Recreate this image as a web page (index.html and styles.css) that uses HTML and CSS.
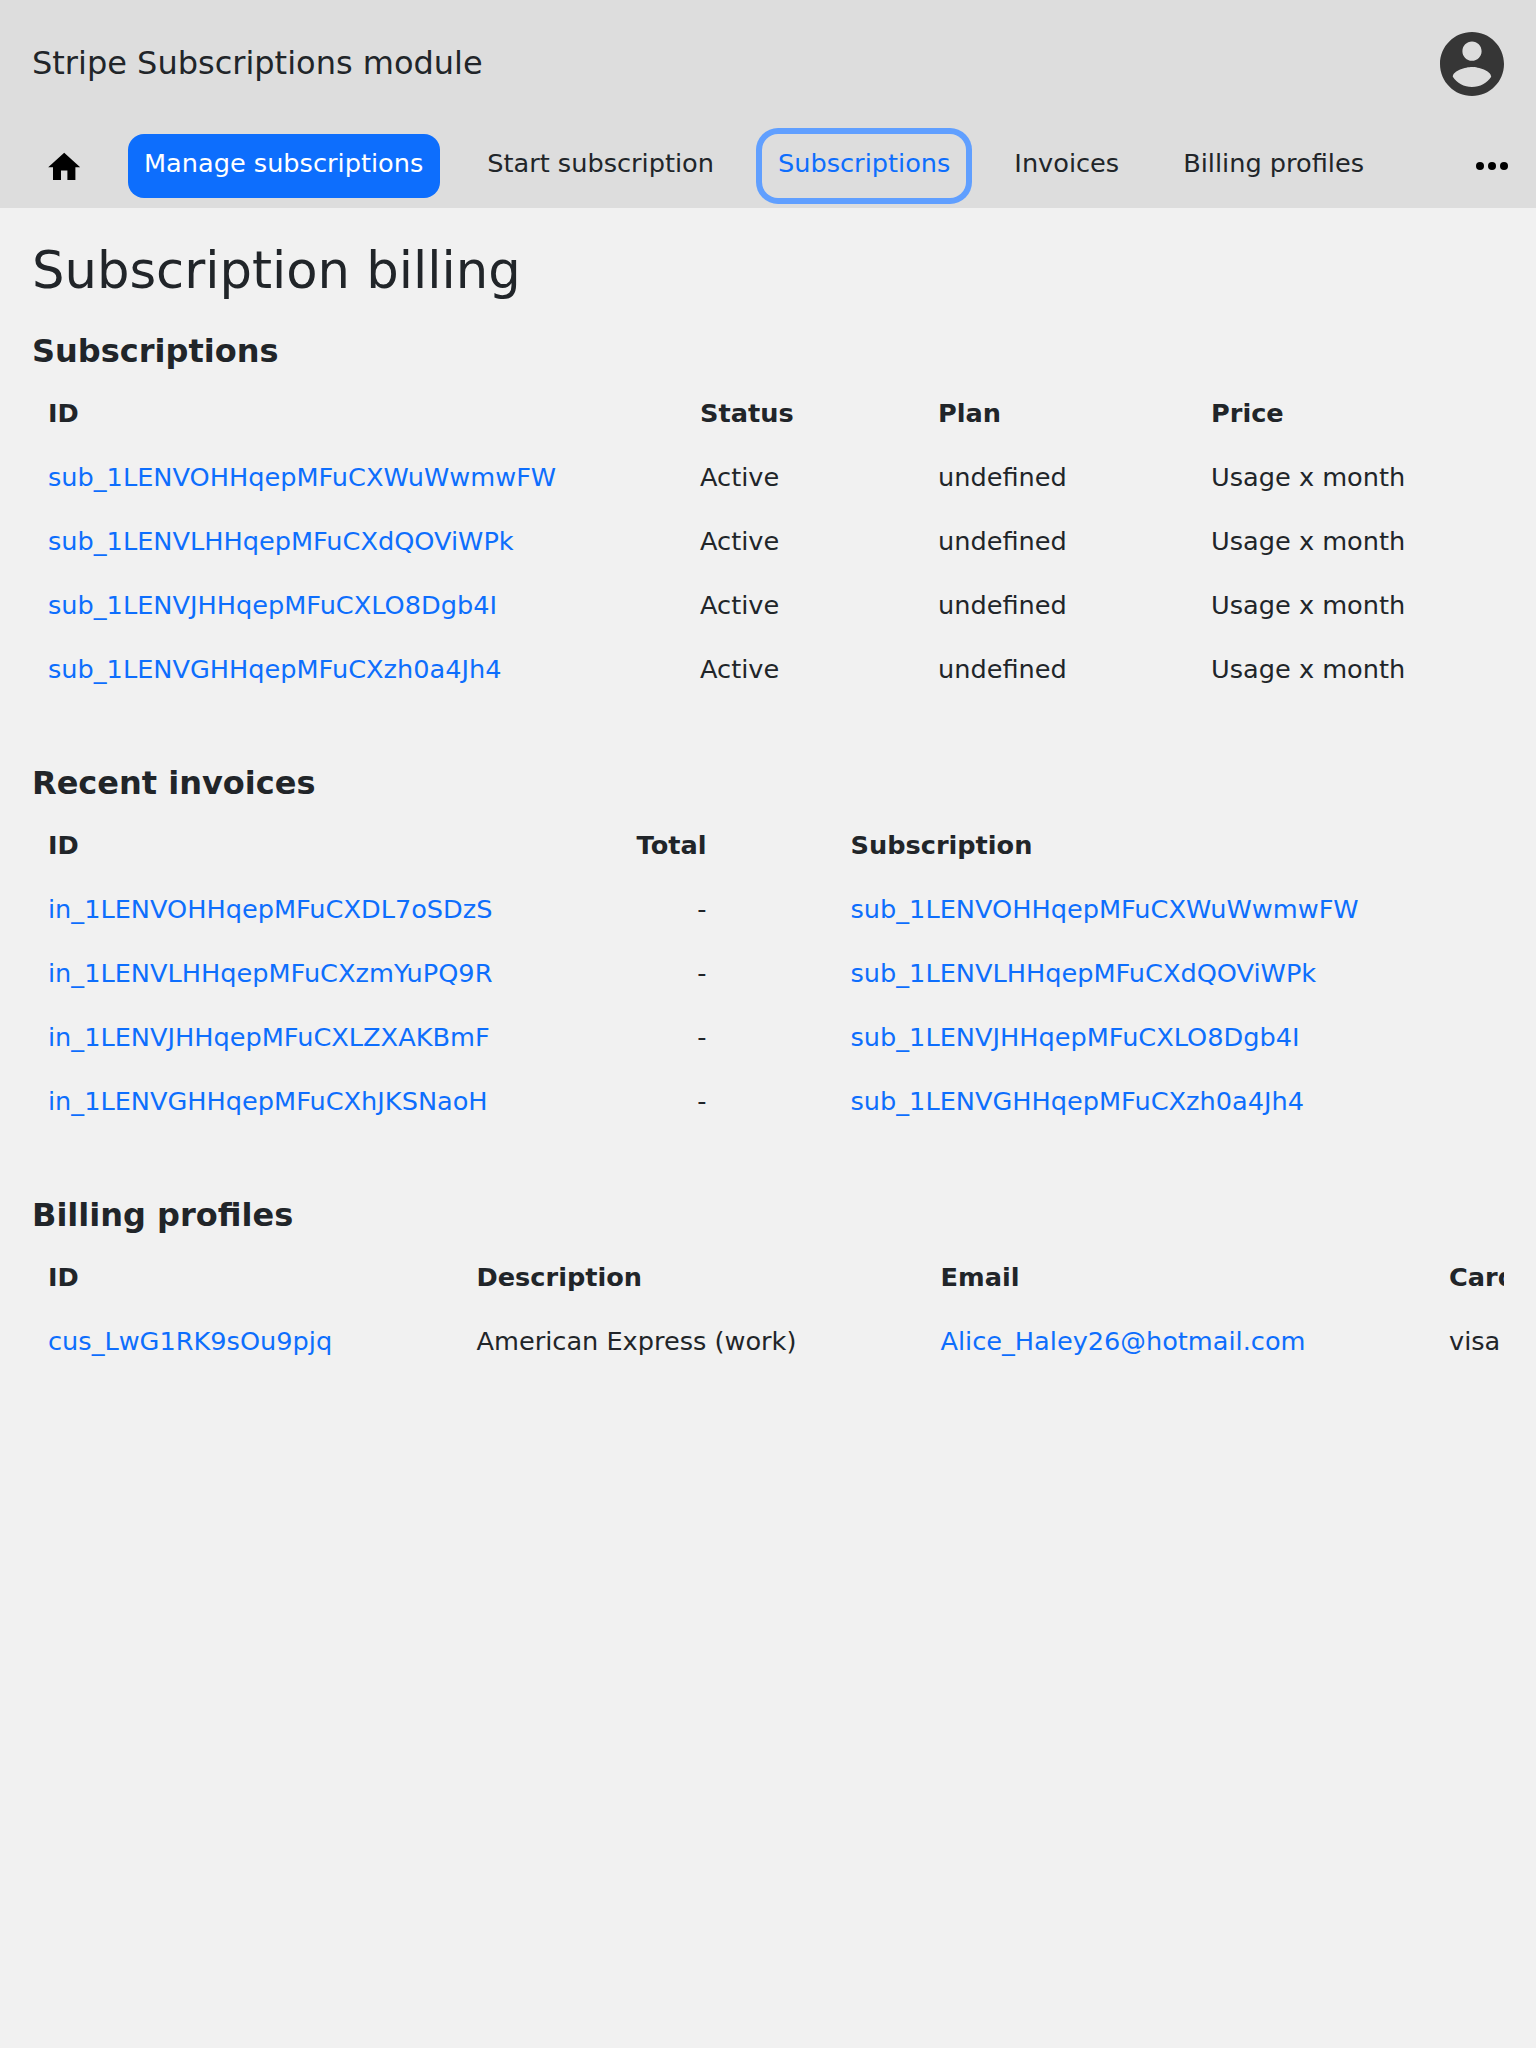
FILE: index.html
```html
<!DOCTYPE html>
<html lang="en">
<head>
<meta charset="utf-8">
<title>Subscription billing</title>
<link rel="stylesheet" href="styles.css">
</head>
<body>
<header class="header">
  <div class="title-bar">
    <span class="app-title">Stripe Subscriptions module</span>
    <svg class="avatar" viewBox="2 2 20 20"><path d="M12 2C6.48 2 2 6.48 2 12s4.480 10 10 10 10-4.480 10-10S17.520 2 12 2zm0 3c1.660 0 3 1.340 3 3s-1.340 3-3 3-3-1.340-3-3 1.340-3 3-3zm0 14.200c-2.500 0-4.710-1.280-6-3.220.03-1.990 4-3.080 6-3.080 1.990 0 5.970 1.090 6 3.080-1.290 1.940-3.500 3.220-6 3.220z"/></svg>
  </div>
  <nav class="nav">
    <a class="home"><svg class="home-icon" viewBox="0 0 24 24"><path d="M10 20v-6h4v6h5v-8h3L12 3 2 12h3v8z"/></svg></a>
    <a class="item active">Manage subscriptions</a>
    <a class="item">Start subscription</a>
    <a class="item focused">Subscriptions</a>
    <a class="item">Invoices</a>
    <a class="item">Billing profiles</a>
    <svg class="more" viewBox="0 0 32 8"><circle cx="4" cy="4" r="4"/><circle cx="16" cy="4" r="4"/><circle cx="28" cy="4" r="4"/></svg>
  </nav>
</header>
<main class="content">
  <h1>Subscription billing</h1>
  <section>
    <h2>Subscriptions</h2>
    <div class="scroller">
    <table class="subscriptions">
      <colgroup><col class="id"><col class="status"><col class="plan"><col class="price"></colgroup>
      <tr><th>ID</th><th>Status</th><th>Plan</th><th>Price</th></tr>
      <tr><td><a>sub_1LENVOHHqepMFuCXWuWwmwFW</a></td><td>Active</td><td>undefined</td><td>Usage x month</td></tr>
      <tr><td><a>sub_1LENVLHHqepMFuCXdQOViWPk</a></td><td>Active</td><td>undefined</td><td>Usage x month</td></tr>
      <tr><td><a>sub_1LENVJHHqepMFuCXLO8Dgb4I</a></td><td>Active</td><td>undefined</td><td>Usage x month</td></tr>
      <tr><td><a>sub_1LENVGHHqepMFuCXzh0a4Jh4</a></td><td>Active</td><td>undefined</td><td>Usage x month</td></tr>
    </table>
    </div>
  </section>
  <section>
    <h2>Recent invoices</h2>
    <div class="scroller">
    <table class="invoices">
      <colgroup><col class="id"><col class="total"><col class="gap"><col class="subscription"></colgroup>
      <tr><th>ID</th><th class="number">Total</th><th></th><th>Subscription</th></tr>
      <tr><td><a>in_1LENVOHHqepMFuCXDL7oSDzS</a></td><td class="number">-</td><td></td><td><a>sub_1LENVOHHqepMFuCXWuWwmwFW</a></td></tr>
      <tr><td><a>in_1LENVLHHqepMFuCXzmYuPQ9R</a></td><td class="number">-</td><td></td><td><a>sub_1LENVLHHqepMFuCXdQOViWPk</a></td></tr>
      <tr><td><a>in_1LENVJHHqepMFuCXLZXAKBmF</a></td><td class="number">-</td><td></td><td><a>sub_1LENVJHHqepMFuCXLO8Dgb4I</a></td></tr>
      <tr><td><a>in_1LENVGHHqepMFuCXhJKSNaoH</a></td><td class="number">-</td><td></td><td><a>sub_1LENVGHHqepMFuCXzh0a4Jh4</a></td></tr>
    </table>
    </div>
  </section>
  <section>
    <h2>Billing profiles</h2>
    <div class="scroller">
    <table class="profiles">
      <colgroup><col class="id"><col class="description"><col class="email"><col class="card"></colgroup>
      <tr><th>ID</th><th>Description</th><th>Email</th><th>Card</th></tr>
      <tr><td><a>cus_LwG1RK9sOu9pjq</a></td><td>American Express (work)</td><td><a>Alice_Haley26@hotmail.com</a></td><td>visa</td></tr>
    </table>
    </div>
  </section>
</main>
</body>
</html>
```
FILE: styles.css
```css
* { box-sizing: border-box; }

body {
  margin: 0;
  min-height: 100vh;
  background: #f1f1f1;
  color: #212529;
  font: 25.6px/38.4px "DejaVu Sans", sans-serif;
}

.header { height: 208px; background: #ddd; }

.title-bar {
  display: flex;
  align-items: center;
  justify-content: space-between;
  height: 128px;
  padding: 0 32px;
}

.app-title { padding-bottom: 2px; font-size: 32px; line-height: 48px; }
.avatar { width: 64px; height: 64px; fill: #363636; }

.nav {
  display: flex;
  gap: 32px;
  padding: 6px 28px 0 32px;
}

.home {
  display: flex;
  justify-content: center;
  width: 64px;
  padding-top: 13.6px;
}

.home-icon { width: 38.4px; height: 38.4px; }

.item {
  height: 64px;
  padding: 10px 16px;
  border-radius: 16px;
  white-space: nowrap;
}

.active { min-width: 312px; margin-right: -0.8px; background: #0d6efd; color: #fff; }
.focused { color: #0d6efd; box-shadow: 0 0 0 6px #609fff; }

.more { width: 32px; height: 8px; margin: 28px 0 0 auto; }

.content { padding: 32px 32px 0; }

h1 {
  margin: 0 0 26px;
  font-size: 51.2px;
  line-height: 61px;
  font-weight: 400;
}

section { margin-bottom: 58px; }
h2 { margin: 0 0 6px; font-size: 32px; line-height: 48px; }

.scroller { overflow: hidden; }

table { table-layout: fixed; width: 1472px; border-collapse: collapse; }
tr { height: 64px; }
th, td { padding: 0 16px; text-align: left; white-space: nowrap; }
td a { color: #0d6efd; }
.number { text-align: right; }

.subscriptions .id { width: 652px; }
.subscriptions .status { width: 238px; }
.subscriptions .plan { width: 273px; }

.invoices .id { width: 540px; }
.invoices .total { width: 150.5px; }
.invoices .gap { width: 112px; }

.profiles { width: 1620px; }
.profiles .id { width: 428.5px; }
.profiles .description { width: 464px; }
.profiles .email { width: 508.5px; }
```
